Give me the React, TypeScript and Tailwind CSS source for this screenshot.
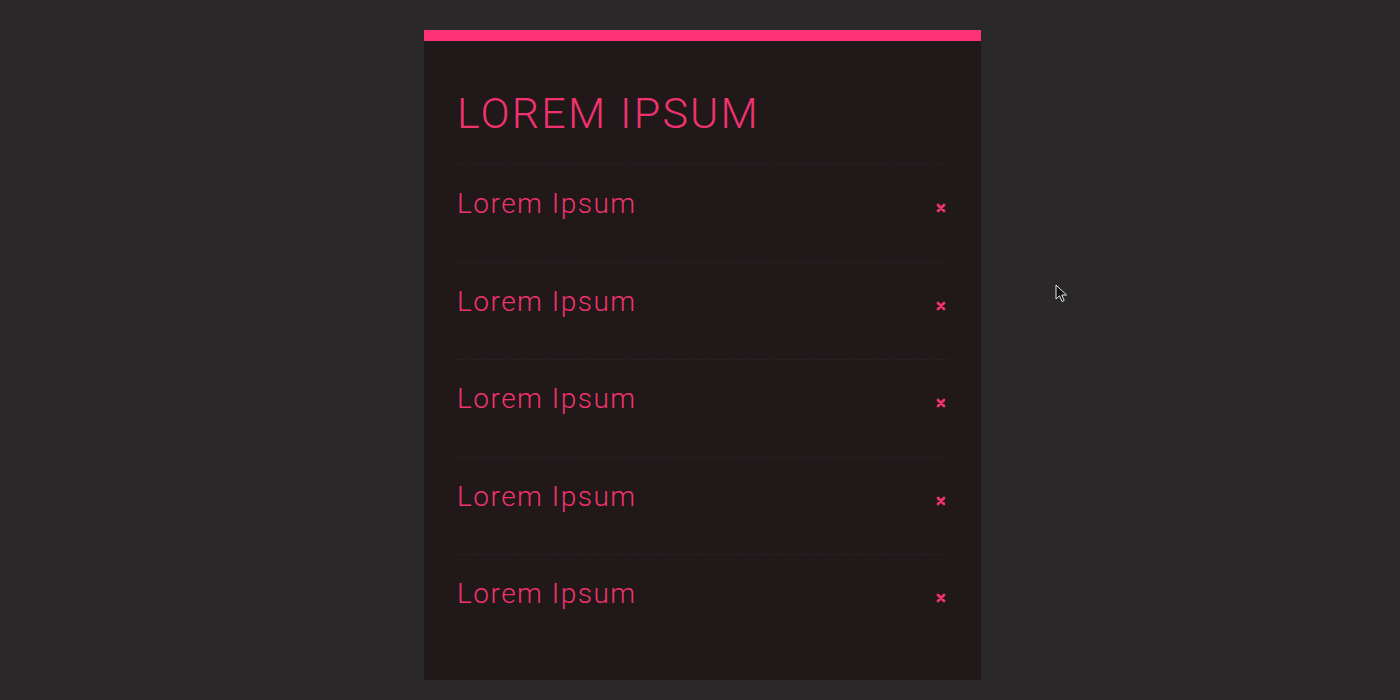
const items = ["Lorem Ipsum", "Lorem Ipsum", "Lorem Ipsum", "Lorem Ipsum", "Lorem Ipsum"];

function CloseIcon() {
  return (
    <svg width="10" height="10" viewBox="0 0 10 10" className="block">
      <path d="M2 2 L8 8 M8 2 L2 8" stroke="#f0336f" strokeWidth="2.8" strokeLinecap="round" />
    </svg>
  );
}

function Cursor() {
  return (
    <svg
      width="14"
      height="20"
      viewBox="0 0 14 20"
      className="absolute left-[1055px] top-[284px]"
    >
      <path
        d="M1 1 L1 15 L4.5 11.8 L7 17.5 L9.2 16.5 L6.8 11 L11.5 11 Z"
        fill="#111"
        stroke="#e8e8e8"
        strokeWidth="1"
        strokeLinejoin="round"
      />
    </svg>
  );
}

export default function App() {
  return (
    <div
      className="relative h-[700px] w-full overflow-hidden bg-[#2a2828] pt-[30px]"
      style={{ fontFamily: "Roboto, 'Liberation Sans', sans-serif" }}
    >
      <div className="ml-[424px] flex h-[650px] w-[557px] flex-col bg-[#201819]">
        <div className="h-[11px] bg-[#ff3377]" />
        <div className="flex flex-col px-[33px] pt-[51px]">
          <h1 className="text-[43px] font-light leading-none tracking-[2.2px] text-[#f0336f]">
            LOREM IPSUM
          </h1>
          <ul className="mt-[29px] flex flex-col">
            {items.map((item, i) => (
              <li
                key={i}
                className="flex h-[97.5px] items-start justify-between border-t border-dashed border-[#2a2224] pt-[25px] pr-[2px]"
              >
                <span className="text-[28px] font-light leading-[28px] tracking-[1.5px] text-[#f0336f]">
                  {item}
                </span>
                <span className="mt-[13px]">
                  <CloseIcon />
                </span>
              </li>
            ))}
          </ul>
        </div>
      </div>
      <Cursor />
    </div>
  );
}
